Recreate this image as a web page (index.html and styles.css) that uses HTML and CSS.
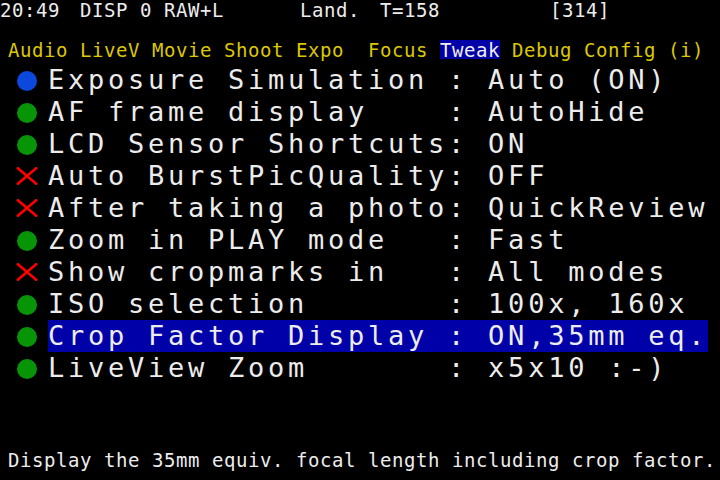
FILE: index.html
```html
<!DOCTYPE html>
<html>
<head>
<meta charset="utf-8">
<link rel="stylesheet" href="styles.css">
</head>
<body>
<div class="screen">
  <div class="status">
    <span class="st st-time">20:49</span>
    <span class="st st-disp">DISP 0 RAW+L</span>
    <span class="st st-mode">Land.</span>
    <span class="st st-temp">T=158</span>
    <span class="st st-shots">[314]</span>
  </div>
  <div class="tabs"><span>Audio LiveV Movie Shoot Expo  Focus </span><span class="tab-active">Tweak</span><span> Debug Config (i)</span></div>
  <ul class="menu">
    <li class="row"><span class="icon"><span class="dot dot-blue"></span></span><span class="label">Exposure Simulation : Auto (ON)</span></li>
    <li class="row"><span class="icon"><span class="dot dot-green"></span></span><span class="label">AF frame display    : AutoHide</span></li>
    <li class="row"><span class="icon"><span class="dot dot-green"></span></span><span class="label">LCD Sensor Shortcuts: ON</span></li>
    <li class="row"><span class="icon"><svg class="cross" viewBox="0 0 22 18" width="22" height="18"><path d="M1 0.5 L21 17.5 M21 0.5 L1 17.5" stroke="#ff0000" stroke-width="2.6" fill="none"/></svg></span><span class="label">Auto BurstPicQuality: OFF</span></li>
    <li class="row"><span class="icon"><svg class="cross" viewBox="0 0 22 18" width="22" height="18"><path d="M1 0.5 L21 17.5 M21 0.5 L1 17.5" stroke="#ff0000" stroke-width="2.6" fill="none"/></svg></span><span class="label">After taking a photo: QuickReview</span></li>
    <li class="row"><span class="icon"><span class="dot dot-green"></span></span><span class="label">Zoom in PLAY mode   : Fast</span></li>
    <li class="row"><span class="icon"><svg class="cross" viewBox="0 0 22 18" width="22" height="18"><path d="M1 0.5 L21 17.5 M21 0.5 L1 17.5" stroke="#ff0000" stroke-width="2.6" fill="none"/></svg></span><span class="label">Show cropmarks in   : All modes</span></li>
    <li class="row"><span class="icon"><span class="dot dot-green"></span></span><span class="label">ISO selection       : 100x, 160x</span></li>
    <li class="row"><span class="icon"><span class="dot dot-green"></span></span><span class="label label-selected">Crop Factor Display : ON,35mm eq.</span></li>
    <li class="row"><span class="icon"><span class="dot dot-green"></span></span><span class="label">LiveView Zoom       : x5x10 :-)</span></li>
  </ul>
  <div class="help">Display the 35mm equiv. focal length including crop factor.</div>
</div>
</body>
</html>
```

FILE: styles.css
```css
html, body {
  margin: 0;
  padding: 0;
  background: #000;
}

.screen {
  width: 720px;
  height: 480px;
  background: #000;
  color: #ececec;
  font-family: "DejaVu Sans Mono", "Liberation Mono", monospace;
  display: flex;
  flex-direction: column;
  overflow: hidden;
}

.status {
  height: 20px;
  display: flex;
  font-size: 19px;
  line-height: 20px;
  letter-spacing: 0.56px;
  white-space: pre;
}

.st { display: block; }
.st-time { margin-left: 0; }
.st-disp { margin-left: 20px; }
.st-mode { margin-left: 76px; }
.st-temp { margin-left: 20px; }
.st-shots { margin-left: 110px; }

.tabs {
  margin-top: 20px;
  height: 20px;
  padding-left: 8px;
  font-size: 19px;
  line-height: 20px;
  letter-spacing: 0.56px;
  white-space: pre;
  color: #dcc800;
  display: flex;
}

.tab-active {
  background: #0000a8;
  color: #f0f0f0;
  height: 19px;
}

.menu {
  list-style: none;
  margin: 4px 0 0 0;
  padding: 0;
}

.row {
  height: 32px;
  display: flex;
  align-items: flex-start;
}

.icon {
  width: 48px;
  height: 32px;
  display: flex;
  align-items: center;
  justify-content: flex-start;
  padding-left: 16px;
  box-sizing: border-box;
}

.dot {
  width: 20px;
  height: 20px;
  border-radius: 50%;
  margin-left: 1px;
  margin-top: 1px;
}

.dot-blue { background: #0c48dc; }
.dot-green { background: #079507; }

.cross {
  display: block;
  margin-top: -1px;
}

.label {
  font-size: 27px;
  line-height: 32px;
  height: 32px;
  letter-spacing: 3.75px;
  white-space: pre;
}

.label-selected {
  background: #0000a8;
}

.help {
  margin-top: auto;
  margin-bottom: 10px;
  padding-left: 8px;
  font-size: 19px;
  line-height: 20px;
  letter-spacing: 0.56px;
  white-space: pre;
}
```
